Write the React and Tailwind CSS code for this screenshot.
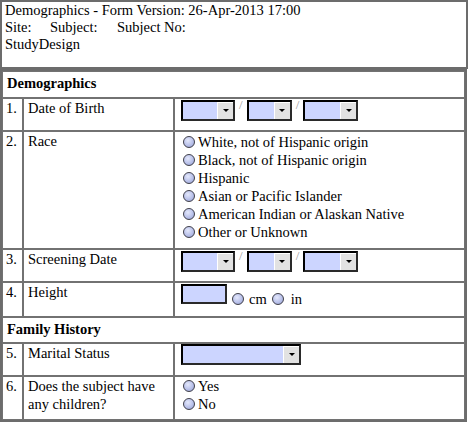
import React from "react";

function Select({ width }) {
  return (
    <div
      className="flex h-[21px] border-2 border-t-black border-l-black border-b-[#2a2a2a] border-r-[#2a2a2a] bg-[#ccd5ff]"
      style={{ width }}
    >
      <div className="flex-1" />
      <div className="flex w-[16px] items-center justify-center border-l border-t border-l-white border-t-white bg-[#e2e2e2]">
        <svg width="6" height="4" viewBox="0 0 6 4">
          <path d="M0 0h6L3 3z" fill="#000" />
        </svg>
      </div>
    </div>
  );
}

function Radio() {
  return (
    <span className="inline-block h-[12px] w-[12px] shrink-0 rounded-full border border-[#3f3f4a] bg-[radial-gradient(circle_at_40%_35%,#e4e8fb_0%,#b9c1ea_55%,#8f99c9_100%)]" />
  );
}

function RadioLine({ label }) {
  return (
    <div className="flex h-[18px] items-center gap-[3px] pl-[2px]">
      <Radio />
      <span>{label}</span>
    </div>
  );
}

function DateSelects() {
  return (
    <div className="flex items-start pt-[1px]">
      <Select width={54} />
      <span className="mx-[4px] -mt-[2px] text-[13px] leading-[14px] text-[#9a9a9a]">/</span>
      <Select width={45} />
      <span className="mx-[4px] -mt-[2px] text-[13px] leading-[14px] text-[#9a9a9a]">/</span>
      <Select width={55} />
    </div>
  );
}

const cell = "border border-[#727272] align-top";

function Row({ num, label, height, children }) {
  return (
    <tr style={{ height }}>
      <td className={`${cell} pl-[3px]`}>{num}</td>
      <td className={`${cell} pl-[4px]`}>{label}</td>
      <td className={`${cell} pl-[6px]`}>{children}</td>
    </tr>
  );
}

function Section({ title, height }) {
  return (
    <tr style={{ height }}>
      <td colSpan={3} className={`${cell} pl-[4px] pt-[2px] align-middle font-bold`}>
        {title}
      </td>
    </tr>
  );
}

export default function App() {
  return (
    <div className="w-[468px] bg-white font-['Liberation_Serif',serif] text-[14.5px] leading-[18px] text-black">
      {/* Header */}
      <div className="h-[69px] border-2 border-[#6c6c6c] pl-[3px] leading-[17px]">
        <div>Demographics - Form Version: 26-Apr-2013 17:00</div>
        <div className="flex">
          <span className="w-[45px]">Site:</span>
          <span className="w-[67px]">Subject:</span>
          <span>Subject No:</span>
        </div>
        <div>StudyDesign</div>
      </div>

      {/* Form table */}
      <table className="w-[467px] table-fixed border-separate border-spacing-0 border-2 border-[#6c6c6c]">
        <colgroup>
          <col className="w-[21px]" />
          <col className="w-[151px]" />
          <col />
        </colgroup>
        <tbody>
          <Section title="Demographics" height={27} />
          <Row num="1." label="Date of Birth" height={33}>
            <DateSelects />
          </Row>
          <Row num="2." label="Race" height={118}>
            <div className="pt-[1px]">
              <RadioLine label="White, not of Hispanic origin" />
              <RadioLine label="Black, not of Hispanic origin" />
              <RadioLine label="Hispanic" />
              <RadioLine label="Asian or Pacific Islander" />
              <RadioLine label="American Indian or Alaskan Native" />
              <RadioLine label="Other or Unknown" />
            </div>
          </Row>
          <Row num="3." label="Screening Date" height={33}>
            <DateSelects />
          </Row>
          <Row num="4." label="Height" height={35}>
            <div className="flex items-end pt-[1px]">
              <div className="h-[20px] w-[46px] border-2 border-t-black border-l-black border-b-[#2a2a2a] border-r-[#2a2a2a] bg-[#ccd5ff]" />
              <div className="-mb-[4px] ml-[5px] flex items-center gap-[5px]">
                <Radio />
                <span>cm</span>
                <Radio />
                <span className="ml-[2px]">in</span>
              </div>
            </div>
          </Row>
          <Section title="Family History" height={26} />
          <Row num="5." label="Marital Status" height={33}>
            <Select width={120} />
          </Row>
          <Row num="6." label={<>Does the subject have<br />any children?</>} height={44}>
            <RadioLine label="Yes" />
            <RadioLine label="No" />
          </Row>
        </tbody>
      </table>
    </div>
  );
}
